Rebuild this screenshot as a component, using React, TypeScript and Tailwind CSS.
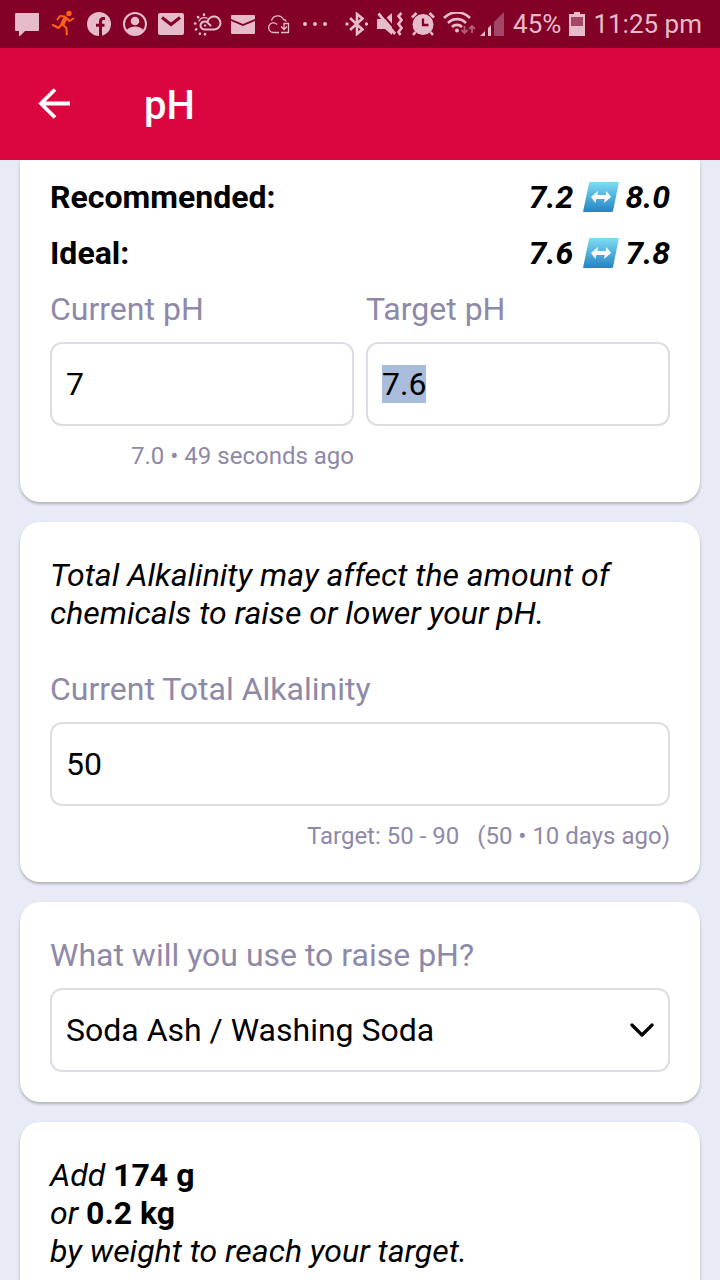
import { useEffect, useRef, useState } from "react";

const inputClass =
  "w-full h-[84px] rounded-xl border-2 border-[#dddde4] bg-white px-[14px] text-[32px] leading-[43px] text-black caret-transparent outline-none selection:bg-[#a9bcdc] selection:text-black";
const labelClass = "block text-[32px] leading-[38px] text-[#8e89a8]";
const hintClass = "mt-[15px] text-right text-2xl leading-[31px] text-[#8e89a8]";

function StatusBar() {
  return (
    <div className="flex h-12 items-center justify-between bg-[#830026] pl-[15px] pr-[18px] text-[#e6bccb]">
      <div className="flex items-center gap-3">
        {/* Message */}
        <svg className="h-6 w-6" viewBox="0 0 24 24" fill="currentColor">
          <path d="M1 1h22a1 1 0 0 1 1 1v16a1 1 0 0 1-1 1H10l-6 6v-6H1a1 1 0 0 1-1-1V2a1 1 0 0 1 1-1z" />
        </svg>
        {/* Runner */}
        <svg className="h-6 w-6 overflow-visible" viewBox="0 0 24 24" fill="none" stroke="#ff6118" strokeWidth="2" strokeLinecap="round" strokeLinejoin="round">
          <circle cx="18" cy="1.500" r="2.700" fill="#ff6118" stroke="none" />
          <path d="M14.200 6.500 11.500 12" strokeWidth="4.200" />
          <path d="M14 4.500 9 4 6.500 7.500M15.500 6l3 3L22.500 6.500M11.500 12.500l4 3.500.3 6.500M10.500 12.500 7.500 16 1.800 13" />
        </svg>
        {/* Facebook */}
        <svg className="h-6 w-6" viewBox="0 0 24 24">
          <circle cx="12" cy="12" r="12" fill="currentColor" />
          <path d="M18 6.500h-1.500c-2 0-3 1-3 3V24M9 13.200h8.500" fill="none" stroke="#830026" strokeWidth="3" />
        </svg>
        {/* Account */}
        <svg className="h-6 w-6" viewBox="0 0 24 24" fill="currentColor">
          <circle cx="12" cy="12" r="11" fill="none" stroke="currentColor" strokeWidth="2" />
          <circle cx="12" cy="9" r="4.300" />
          <path d="M3.500 18.500c2-3 5-4 8.500-4s6.500 1 8.500 4A11 11 0 0 1 12 23a11 11 0 0 1-8.500-4.500z" />
        </svg>
        {/* Mail */}
        <svg className="h-6 w-6 overflow-visible" viewBox="0 0 24 24">
          <rect x="-1" y="1" width="26" height="22" rx="2" fill="currentColor" />
          <path d="m3 5.500 9 7 9-7" fill="none" stroke="#830026" strokeWidth="3" />
        </svg>
        {/* Weather */}
        <svg className="h-6 w-6 overflow-visible" viewBox="0 0 24 24" fill="none" stroke="currentColor" strokeWidth="2" strokeLinecap="round">
          <path d="M15.500 13.500 12.500 10.500C10.500 8.500 6 9.500 5.500 13c-.3 2.500 1.500 4.500 4 4.500H19a6.500 6.500 0 1 0-6.300-8.200" />
          <path d="M9.800 13.500h.6" />
          <path d="M4 9A6 6 0 0 1 12 6.200" strokeWidth="1.300" />
          <path d="M9 2.500v.4M3 5l.3.3M0 11.500h.4M1 17.500l.3-.2M4.800 21.800l.2-.3M10 22v.4" strokeWidth="2.500" />
        </svg>
        {/* Email */}
        <svg className="h-6 w-6" viewBox="0 0 24 24" fill="currentColor">
          <path d="M1 3h22a1 1 0 0 1 1 1v3l-12 5L0 7V4a1 1 0 0 1 1-1zM0 9l12 5 12-5v12a1 1 0 0 1-1 1H1a1 1 0 0 1-1-1z" />
        </svg>
        {/* Cloud sync */}
        <svg className="h-6 w-6" viewBox="0 0 24 24" fill="none" stroke="currentColor" strokeWidth="1.300">
          <path d="M12 20.500H6.500a4.800 4.800 0 1 1 3.500-8M4.500 8.500A6.500 6.500 0 0 1 16.500 7.500c1.500.3 2.300 1 2.800 2M14 20.500h7.500v-9H17v5.500M14 14.500l3 3 3-3" />
        </svg>
        {/* More notifications */}
        <svg className="h-6 w-6" viewBox="0 0 24 24" fill="currentColor">
          <circle cx="2" cy="12" r="2" />
          <circle cx="12" cy="12" r="2" />
          <circle cx="22" cy="12" r="2" />
        </svg>
      </div>

      <div className="flex items-center gap-2 text-[26px] leading-[30px]">
        {/* Bluetooth */}
        <svg className="h-6 w-6" viewBox="0 0 24 24" fill="none" stroke="currentColor" strokeWidth="2.600">
          <path d="m5 6 12.500 11.500L12 22V2l5.500 4.500L5 18" />
          <circle cx="2" cy="12" r="1.700" fill="currentColor" stroke="none" />
          <circle cx="21.500" cy="12" r="1.700" fill="currentColor" stroke="none" />
        </svg>
        {/* Muted, vibrating */}
        <svg className="h-6 w-[26px]" viewBox="0 0 26 24">
          <path d="M0 7h8l7-6v22l-7-6H0z" fill="currentColor" />
          <path d="M3.500 0 19 18" stroke="#830026" strokeWidth="2" />
          <path d="M1.500 1.500 18 22" stroke="currentColor" strokeWidth="2.800" />
          <path d="m24.500 1-3 3 3 4-3 4 3 4-3 4 2 3" fill="none" stroke="currentColor" strokeWidth="2.600" />
        </svg>
        {/* Alarm */}
        <svg className="h-6 w-6" viewBox="0 0 24 24">
          <circle cx="12" cy="12.500" r="10.500" fill="currentColor" />
          <path d="M12 6.500v6.500h5.500" fill="none" stroke="#830026" strokeWidth="2.300" />
          <path d="M1 5.500 5.500 1M18.500 1 23 5.500M4.500 20l-2.500 3M19.500 20l2.500 3" stroke="currentColor" strokeWidth="2.600" />
        </svg>
        {/* Wi-Fi and signal */}
        <svg className="h-6 w-[62px]" viewBox="0 0 62 24" fill="none" stroke="currentColor" strokeWidth="2.600">
          <path d="M1 6a18 18 0 0 1 26 0M5 11a12.500 12.500 0 0 1 18 0M9 15a7 7 0 0 1 10 0" />
          <circle cx="14" cy="18.500" r="2" fill="currentColor" stroke="none" />
          <path d="M21.500 14v7m-3-3 3 3 3-3M29 21v-7m-3 3 3-3 3 3" stroke="#b35c7b" strokeWidth="1.800" />
          <path d="M37 24h5v-5zM45 24h3V13l-3 3z" fill="currentColor" stroke="none" />
          <path d="M51 24h10V0L51 10z" fill="#a34668" stroke="none" />
        </svg>
        <span>45%</span>
        {/* Battery */}
        <svg className="h-6 w-4" viewBox="0 0 16 24">
          <path d="M5 0h6v2h5v22H0V2h5z" fill="currentColor" />
          <path d="M2 5h12v9H2z" fill="#a34668" />
        </svg>
        <span>11:25 pm</span>
      </div>
    </div>
  );
}

function RangeArrow() {
  return (
    <svg className="h-[30px] w-9" viewBox="0 0 36 30" role="img" aria-label="to">
      <defs>
        <linearGradient id="rangeFill" x1="0" y1="0" x2="0" y2="1">
          <stop offset="0" stopColor="#7ddcf2" />
          <stop offset="1" stopColor="#2584c5" />
        </linearGradient>
      </defs>
      <path d="M7 0h28.500q.5 0 .4.500L30 29q-.2 1-1 1H.5q-.5 0-.4-.5L6 1q.2-1 1-1z" fill="url(#rangeFill)" />
      <path d="m8 15 7-6-.7 4h8.500l.7-4 4.500 6-7 6 .7-4h-8.500l-.7 4z" fill="#fff" />
    </svg>
  );
}

function RangeRow({ label, low, high }: { label: string; low: string; high: string }) {
  return (
    <div className="flex items-center justify-between text-[32px] font-bold leading-[38px]">
      <span>{label}</span>
      <span className="flex items-center gap-x-[6px] italic">
        <span className="pr-1">{low}</span>
        <RangeArrow />
        {high}
      </span>
    </div>
  );
}

function Card({ children }: { children: React.ReactNode }) {
  return (
    <section className="rounded-[20px] bg-white px-[30px] pb-[30px] pt-[34px] shadow-[0_2px_3px_rgba(0,0,0,0.25)]">
      {children}
    </section>
  );
}

export default function App() {
  const [currentPh, setCurrentPh] = useState("7");
  const [targetPh, setTargetPh] = useState("7.6");
  const [alkalinity, setAlkalinity] = useState("50");
  const [chemical, setChemical] = useState("soda-ash");
  const targetRef = useRef<HTMLInputElement>(null);

  useEffect(() => {
    targetRef.current?.focus({ preventScroll: true });
    targetRef.current?.select();
  }, []);

  return (
    <div className="flex h-screen flex-col bg-[#e8ebf5] font-['Roboto',sans-serif] text-black">
      <header className="relative z-10">
        <StatusBar />
        <div className="flex h-28 items-center bg-[#db0640] pl-[38px] text-white">
          <button type="button" aria-label="Back" className="mr-[74px]">
            <svg className="h-8 w-8" viewBox="0 0 32 32" fill="none" stroke="currentColor" strokeWidth="3.800">
              <path d="M32 15.500H4M17 1.500 3 15.500l14 14" />
            </svg>
          </button>
          <h1 className="pt-1 text-[40px] font-medium leading-[48px]">pH</h1>
        </div>
      </header>

      <main className="-mt-4 flex min-h-0 flex-1 flex-col gap-5 overflow-y-auto px-5 [scrollbar-width:none] [&>*]:shrink-0">
        <Card>
          <div className="flex flex-col gap-[18px]">
            <RangeRow label="Recommended:" low="7.2" high="8.0" />
            <RangeRow label="Ideal:" low="7.6" high="7.8" />
            <div className="grid grid-cols-2 gap-3">
              <div>
                <label htmlFor="currentPh" className={labelClass}>Current pH</label>
                <input
                  id="currentPh"
                  type="text"
                  inputMode="decimal"
                  value={currentPh}
                  onChange={(e) => setCurrentPh(e.target.value)}
                  className={`mt-[14px] ${inputClass}`}
                />
                <p className={hintClass}>7.0 • 49 seconds ago</p>
              </div>
              <div>
                <label htmlFor="targetPh" className={labelClass}>Target pH</label>
                <input
                  id="targetPh"
                  ref={targetRef}
                  type="text"
                  inputMode="decimal"
                  value={targetPh}
                  onChange={(e) => setTargetPh(e.target.value)}
                  className={`mt-[14px] ${inputClass}`}
                />
              </div>
            </div>
          </div>
        </Card>

        <Card>
          <p className="mb-[38px] text-[32px] italic leading-[38px]">
            Total Alkalinity may affect the amount of chemicals to raise or lower your pH.
          </p>
          <label htmlFor="alkalinity" className={labelClass}>Current Total Alkalinity</label>
          <input
            id="alkalinity"
            type="text"
            inputMode="numeric"
            value={alkalinity}
            onChange={(e) => setAlkalinity(e.target.value)}
            className={`mt-[14px] ${inputClass}`}
          />
          <p className={hintClass}>
            Target: 50 - 90 <span className="ml-3">(50 • 10 days ago)</span>
          </p>
        </Card>

        <Card>
          <label htmlFor="chemical" className={labelClass}>What will you use to raise pH?</label>
          <div className="relative mt-[14px]">
            <select
              id="chemical"
              value={chemical}
              onChange={(e) => setChemical(e.target.value)}
              className={`appearance-none ${inputClass}`}
            >
              <option value="soda-ash">Soda Ash / Washing Soda</option>
            </select>
            <svg
              className="pointer-events-none absolute right-4 top-[34px] h-4 w-6"
              viewBox="0 0 24 16"
              fill="none"
              stroke="currentColor"
              strokeWidth="3.200"
              strokeLinecap="round"
              strokeLinejoin="round"
            >
              <path d="m2 3 10 10L22 3" />
            </svg>
          </div>
        </Card>

        <Card>
          <p className="text-[32px] italic leading-[38px]">
            Add <strong className="not-italic">174 g</strong>
            <br />
            or <strong className="not-italic">0.2 kg</strong>
            <br />
            by weight to reach your target.
          </p>
        </Card>
      </main>
    </div>
  );
}
